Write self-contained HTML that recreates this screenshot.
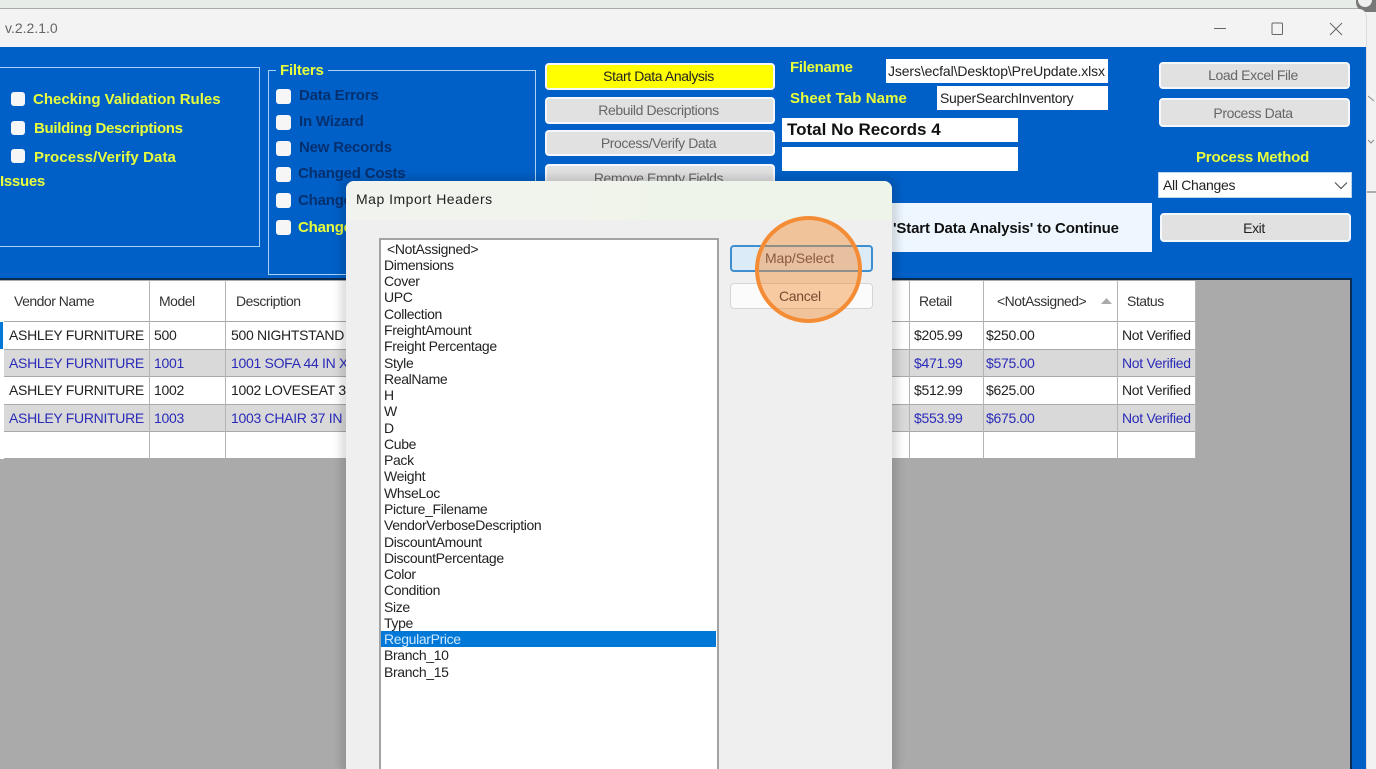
<!DOCTYPE html>
<html><head><meta charset="utf-8"><title>Map Import Headers</title>
<style>
html,body{margin:0;padding:0;width:1376px;height:769px;overflow:hidden}
body{position:relative;background:#f1f2f1;font-family:"Liberation Sans",sans-serif}
div,span,svg{position:absolute}
#p{left:0;top:0;width:1376px;height:769px;overflow:hidden}
.t{white-space:nowrap;font-size:14px;line-height:16px;letter-spacing:-.3px;color:#222}
.y{color:#eaff3c;font-weight:bold;font-size:15px;letter-spacing:0}
.d{color:#04306f;font-weight:bold;font-size:15px;letter-spacing:-.2px}
.h{color:#333;letter-spacing:-.5px}
.cb{width:14px;height:14px;background:#f6f6f6;border-radius:3px}
.btn{background:#e1e1e1;border:2px solid #f4f8fc;border-radius:4px;box-sizing:border-box;text-align:center;color:#666;font-size:14px;letter-spacing:-.4px;white-space:nowrap;padding-right:3px}
.c{position:absolute;box-sizing:border-box;border-right:1px solid #b4b4b4}
.r{left:4px;width:1192px;border-bottom:1px solid #a9a9a9;box-sizing:border-box}
.b{color:#2a2ab8}
.li{left:384px;white-space:nowrap;font-size:14px;line-height:16px;letter-spacing:-.35px;color:#222}
</style></head><body><div id="p">
<div style="left:0;top:0;width:1376px;height:9px;background:#e8ece8;border-bottom:1px solid #aaa;box-sizing:border-box"></div>
<div style="left:1356px;top:0;width:20px;height:12px;border-radius:0 0 0 10px;background:#777"></div>
<div style="left:1358px;top:0;width:14px;height:7px;border-radius:0 0 7px 7px;background:#eee"></div>
<svg style="left:1366px;top:90px" width="10" height="110" fill="none" stroke="#888" stroke-width="1"><path d="M2 6l6 5M2 50l3 3 3-3"/><path d="M0 102h10" stroke="#666"/></svg>

<div style="left:0;top:9px;width:1366px;height:760px;background:#f3f3f3;border-radius:0 8px 0 0;border-right:1px solid #ddd"></div>
<div class="t" style="left:5px;top:20px;color:#666;letter-spacing:0">v.2.2.1.0</div>
<svg style="left:1205px;top:15px" width="150" height="26" fill="none" stroke="#666" stroke-width="1"><path d="M9 13.5h12"/><rect x="67" y="8" width="10.5" height="11.5" rx="1"/><path d="M125 8l12 12M137 8l-12 12"/></svg>

<div style="left:0;top:47px;width:1366px;height:722px;background:#0060c8"></div>

<div style="left:-3px;top:67px;width:263px;height:180px;box-sizing:border-box;border:1px solid #a9d2f4"></div>
<div class="cb" style="left:11px;top:92px"></div><div class="t y" style="left:33px;top:92px">Checking Validation Rules</div>
<div class="cb" style="left:11px;top:121px"></div><div class="t y" style="left:34px;top:121px;letter-spacing:-.3px">Building Descriptions</div>
<div class="cb" style="left:11px;top:149px"></div><div class="t y" style="left:34px;top:150px;letter-spacing:.1px">Process/Verify Data</div>
<div class="t y" style="left:0;top:174px;letter-spacing:-.3px">Issues</div>

<div style="left:268px;top:70px;width:268px;height:205px;box-sizing:border-box;border:1px solid #a9d2f4"></div>
<div class="t y" style="left:276px;top:63px;background:#0060c8;padding:0 4px;letter-spacing:-.2px">Filters</div>
<div class="cb" style="left:276px;top:89px;width:15px;height:15px"></div><div class="t d" style="left:299px;top:88px">Data Errors</div>
<div class="cb" style="left:276px;top:115px;width:15px;height:15px"></div><div class="t d" style="left:299px;top:114px">In Wizard</div>
<div class="cb" style="left:276px;top:141px;width:15px;height:15px"></div><div class="t d" style="left:299px;top:140px">New Records</div>
<div class="cb" style="left:276px;top:167px;width:15px;height:15px"></div><div class="t d" style="left:298px;top:166px">Changed Costs</div>
<div class="cb" style="left:276px;top:193px;width:15px;height:15px"></div><div class="t d" style="left:298px;top:193px">Changed</div>
<div class="cb" style="left:276px;top:220px;width:15px;height:15px"></div><div class="t y" style="left:298px;top:220px;letter-spacing:-.2px">Changed</div>

<div class="btn" style="left:545px;top:63px;width:230px;height:27px;line-height:22px;background:#ffff00;color:#222">Start Data Analysis</div>
<div class="btn" style="left:545px;top:97px;width:230px;height:27px;line-height:22px">Rebuild Descriptions</div>
<div class="btn" style="left:545px;top:130px;width:230px;height:26px;line-height:22px">Process/Verify Data</div>
<div class="btn" style="left:545px;top:164px;width:230px;height:27px;line-height:24px">Remove Empty Fields</div>

<div class="t y" style="left:790px;top:60px;letter-spacing:-.3px">Filename</div>
<div style="left:886px;top:59px;width:222px;height:24px;background:#fff;overflow:hidden"><div class="t" style="left:2px;top:4px;color:#222;letter-spacing:-.12px">Jsers\ecfal\Desktop\PreUpdate.xlsx</div></div>
<div class="t y" style="left:790px;top:91px;letter-spacing:.1px">Sheet Tab Name</div>
<div style="left:937px;top:86px;width:171px;height:24px;background:#fff"></div>
<div class="t" style="left:940px;top:90px">SuperSearchInventory</div>
<div style="left:782px;top:118px;width:236px;height:24px;background:#fff"></div>
<div class="t" style="left:787px;top:122px;font-weight:bold;font-size:17px;color:#111;letter-spacing:0">Total No Records 4</div>
<div style="left:782px;top:147px;width:236px;height:24px;background:#fff"></div>
<div style="left:880px;top:203px;width:272px;height:49px;background:#eef7ff"></div>
<div class="t" style="left:893px;top:221px;font-weight:bold;font-size:15px;color:#111;letter-spacing:-.15px">'Start Data Analysis' to Continue</div>

<div class="btn" style="left:1159px;top:62px;width:191px;height:27px;line-height:22px">Load Excel File</div>
<div class="btn" style="left:1159px;top:98px;width:191px;height:29px;line-height:26px">Process Data</div>
<div class="t y" style="left:1196px;top:150px;letter-spacing:-.2px">Process Method</div>
<div style="left:1158px;top:172px;width:194px;height:26px;background:#fff;border:1px solid #b9d5ee;box-sizing:border-box"></div>
<div class="t" style="left:1163px;top:177px">All Changes</div>
<svg style="left:1334px;top:181px" width="14" height="10" fill="none" stroke="#555" stroke-width="1.2"><path d="M1 1.5l6 6 6-6"/></svg>
<div class="btn" style="left:1160px;top:213px;width:191px;height:29px;line-height:26px;color:#222">Exit</div>

<div style="left:0;top:278px;width:1352px;height:491px;background:#aaa;border-top:2px solid #0b2c52;border-right:2px solid #0b2c52;box-sizing:border-box"></div>

<div style="left:0;top:281px;width:4px;height:178px;background:#fff;border-right:1px solid #b4b4b4"></div>
<div style="left:0;top:322px;width:3px;height:27px;background:#0078d7"></div>
<div style="left:4px;top:281px;width:1192px;height:41px;background:#fff;border-bottom:1px solid #a9a9a9;box-sizing:border-box"></div>
<div class="r" style="top:322px;height:28px;background:#fff"></div>
<div class="r" style="top:350px;height:27px;background:#d9d9d9"></div>
<div class="r" style="top:377px;height:28px;background:#fff"></div>
<div class="r" style="top:405px;height:27px;background:#d9d9d9"></div>
<div class="r" style="top:432px;height:27px;background:#fff"></div>
<div class="c" style="left:149px;top:281px;width:1px;height:178px"></div>
<div class="c" style="left:225px;top:281px;width:1px;height:178px"></div>
<div class="c" style="left:909px;top:281px;width:1px;height:178px"></div>
<div class="c" style="left:983px;top:281px;width:1px;height:178px"></div>
<div class="c" style="left:1117px;top:281px;width:1px;height:178px"></div>
<div class="c" style="left:1195px;top:281px;width:1px;height:178px"></div>

<div class="t h" style="left:14px;top:293px">Vendor Name</div>
<div class="t h" style="left:159px;top:293px">Model</div>
<div class="t h" style="left:236px;top:293px">Description</div>
<div class="t h" style="left:919px;top:293px">Retail</div>
<div class="t h" style="left:997px;top:293px">&lt;NotAssigned&gt;</div>
<svg style="left:1100px;top:297px" width="14" height="8"><path d="M1 7L6.5 1 12 7z" fill="#aaa"/></svg>
<div class="t h" style="left:1127px;top:293px">Status</div>

<div class="t" style="left:9px;top:327px">ASHLEY FURNITURE</div><div class="t" style="left:154px;top:327px">500</div><div class="t" style="left:231px;top:327px">500 NIGHTSTAND</div><div class="t" style="left:914px;top:327px">$205.99</div><div class="t" style="left:986px;top:327px">$250.00</div><div class="t" style="left:1122px;top:327px">Not Verified</div>
<div class="t b" style="left:9px;top:355px">ASHLEY FURNITURE</div><div class="t b" style="left:154px;top:355px">1001</div><div class="t b" style="left:231px;top:355px">1001 SOFA 44 IN X</div><div class="t b" style="left:914px;top:355px">$471.99</div><div class="t b" style="left:986px;top:355px">$575.00</div><div class="t b" style="left:1122px;top:355px">Not Verified</div>
<div class="t" style="left:9px;top:382px">ASHLEY FURNITURE</div><div class="t" style="left:154px;top:382px">1002</div><div class="t" style="left:231px;top:382px">1002 LOVESEAT 3</div><div class="t" style="left:914px;top:382px">$512.99</div><div class="t" style="left:986px;top:382px">$625.00</div><div class="t" style="left:1122px;top:382px">Not Verified</div>
<div class="t b" style="left:9px;top:410px">ASHLEY FURNITURE</div><div class="t b" style="left:154px;top:410px">1003</div><div class="t b" style="left:231px;top:410px">1003 CHAIR 37 IN</div><div class="t b" style="left:914px;top:410px">$553.99</div><div class="t b" style="left:986px;top:410px">$675.00</div><div class="t b" style="left:1122px;top:410px">Not Verified</div>

<div style="left:340px;top:176px;width:558px;height:600px;border-radius:12px;background:rgba(0,0,0,.13);filter:blur(4px)"></div>
<div style="left:346px;top:181px;width:546px;height:588px;background:#efefef;border-radius:8px 8px 0 0;overflow:hidden">
 <div style="left:0;top:0;width:546px;height:39px;background:linear-gradient(90deg,#f1f4ee,#eef4e8)"></div>
 <div class="t" style="left:10px;top:10px;letter-spacing:.5px;color:#222">Map Import Headers</div>
</div>
<div style="left:379px;top:238px;width:340px;height:531px;background:#fff;border:2px solid #a3a3a3;border-bottom:0;box-sizing:border-box"></div>
<div style="left:381px;top:631px;width:335px;height:16px;background:#0078d7"></div>

<div class="li" style="left:387px;top:241px">&lt;NotAssigned&gt;</div>
<div class="li" style="top:257px">Dimensions</div>
<div class="li" style="top:273px">Cover</div>
<div class="li" style="top:289px">UPC</div>
<div class="li" style="top:306px">Collection</div>
<div class="li" style="top:322px">FreightAmount</div>
<div class="li" style="top:338px">Freight Percentage</div>
<div class="li" style="top:355px">Style</div>
<div class="li" style="top:371px">RealName</div>
<div class="li" style="top:387px">H</div>
<div class="li" style="top:403px">W</div>
<div class="li" style="top:420px">D</div>
<div class="li" style="top:436px">Cube</div>
<div class="li" style="top:452px">Pack</div>
<div class="li" style="top:468px">Weight</div>
<div class="li" style="top:485px">WhseLoc</div>
<div class="li" style="top:501px">Picture_Filename</div>
<div class="li" style="top:517px">VendorVerboseDescription</div>
<div class="li" style="top:534px">DiscountAmount</div>
<div class="li" style="top:550px">DiscountPercentage</div>
<div class="li" style="top:566px">Color</div>
<div class="li" style="top:582px">Condition</div>
<div class="li" style="top:599px">Size</div>
<div class="li" style="top:615px">Type</div>
<div class="li" style="top:631px;color:#cfe8ff">RegularPrice</div>
<div class="li" style="top:647px">Branch_10</div>
<div class="li" style="top:664px">Branch_15</div>

<div style="left:730px;top:245px;width:143px;height:27px;box-sizing:border-box;background:#dcebf8;border:2px solid #3f8fd0;border-radius:4px"></div>
<div style="left:730px;top:283px;width:143px;height:26px;box-sizing:border-box;background:#fbfbfb;border:1px solid #d5d5d5;border-radius:4px"></div>
<div style="left:755px;top:216px;width:107px;height:107px;box-sizing:border-box;border-radius:50%;background:rgba(243,143,50,.45);border:4px solid #f48c35"></div>
<div class="t" style="left:765px;top:250px;color:#8a5a40;letter-spacing:-.1px">Map/Select</div>
<div class="t" style="left:779px;top:288px;color:#7a4a30">Cancel</div>
</div></body></html>
